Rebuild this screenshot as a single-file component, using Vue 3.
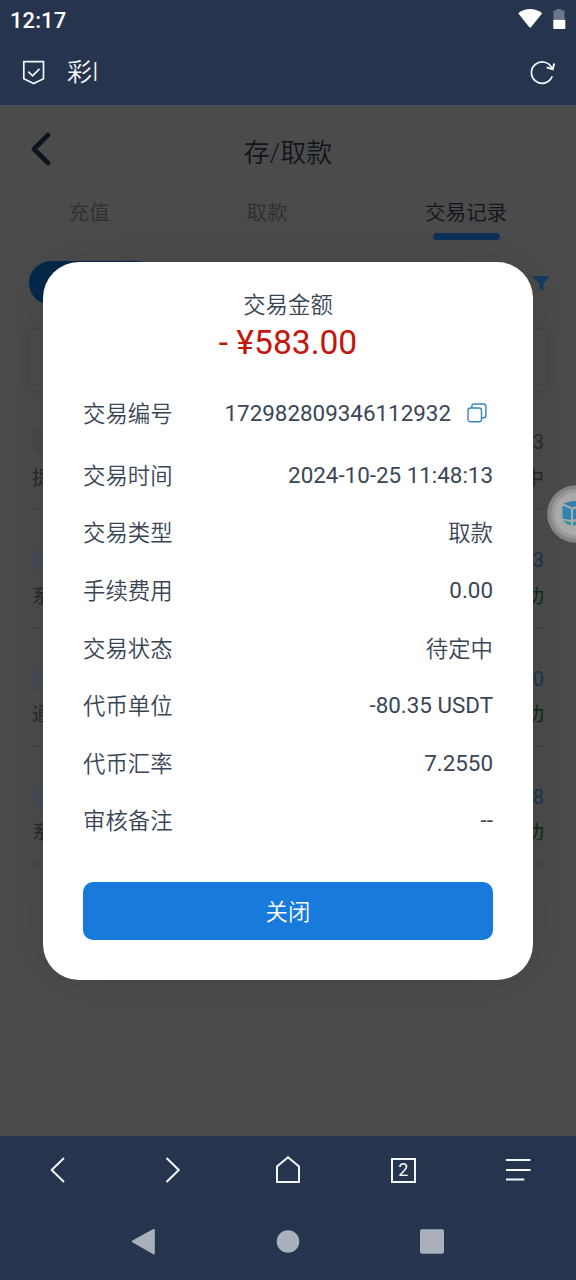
<script setup>
const tabs = ['充值', '取款', '交易记录']
const records = [
  { name: '提', amount: '3', status: '中', kind: 'pending' },
  { name: '系', amount: '3', status: '功', kind: 'done' },
  { name: '通', amount: '0', status: '功', kind: 'done' },
  { name: '系', amount: '8', status: '功', kind: 'done' },
]
const details = [
  ['交易时间', '2024-10-25 11:48:13'],
  ['交易类型', '取款', true],
  ['手续费用', '0.00'],
  ['交易状态', '待定中', true],
  ['代币单位', '-80.35 USDT'],
  ['代币汇率', '7.2550'],
  ['审核备注', '--'],
]
</script>

<template>
  <div class="phone">
    <header class="status">
      <span class="clock">12:17</span>
      <svg width="50" height="24" viewBox="0 0 50 24">
        <path d="M.2 5.2Q12 -3.2 24.2 5.2L13 19.2Q12.2 20 11.4 19.2Z" fill="#fff" />
        <path d="M35.500 2.500h3V.9h5v1.600h3v9h-11z" fill="#6c7789" />
        <path d="M35.3 11.8h12v8.500q0 .8-.8.8H36.1q-.8 0-.8-.8z" fill="#fff" />
      </svg>
    </header>
    <div class="browser">
      <svg class="shield" width="24" height="26" viewBox="0 0 24 26" fill="none" stroke="#f4f7fa" stroke-width="1.7">
        <path d="M1.8 1.700H21.500V18.800L11.700 23.500 1.800 18.800Z" />
        <path d="M6.300 11.700l4.300 4.200 6.900-7" />
      </svg>
      <span class="site">彩I</span>
      <svg class="reload" width="28" height="28" viewBox="0 0 28 28" fill="none" stroke="#f4f7fa" stroke-width="1.7">
        <path d="M23.2 17.3A10.700 10.700 0 1 1 23 9.400" />
        <path d="M17.700 8.400L23.700 10.300 25.200 4.500" stroke-width="2" />
      </svg>
    </div>

    <main class="page">
      <div class="titlebar">
        <svg class="back" width="20" height="34" viewBox="0 0 20 34" fill="none" stroke="#0e1420" stroke-width="4.6" stroke-linecap="round" stroke-linejoin="round">
          <path d="M17 3L3 17l14 14" />
        </svg>
        <span class="title">存/取款</span>
      </div>
      <nav class="tabs">
        <span v-for="(t, i) in tabs" :key="t" class="tab" :class="{ on: i === 2 }">{{ t }}</span>
      </nav>
      <div class="filters">
        <span class="pill"></span>
        <svg width="18" height="18" viewBox="0 0 18 18"><path d="M1 1h16v1.500L11.300 8.500V16l-4-2.600V8.500L1 2.500z" fill="#123c60" /></svg>
      </div>
      <div class="search"></div>
      <ul class="records">
        <li v-for="(r, i) in records" :key="i" :class="r.kind">
          <div class="line top"><i class="dot"></i><span class="sum">{{ r.amount }}</span></div>
          <div class="line"><span>{{ r.name }}</span><span class="state">{{ r.status }}</span></div>
        </li>
      </ul>

      <section class="dialog">
        <div class="caption">交易金额</div>
        <div class="amount">- ¥583.00</div>
        <dl>
          <div class="row first">
            <dt>交易编号</dt>
            <dd>
              172982809346112932
              <svg width="20" height="20" viewBox="0 0 20 20" fill="none" stroke="#3688b8" stroke-width="1.400">
                <rect x="1" y="5" width="13.500" height="13.800" rx="2.600" />
                <path d="M4.800 5V3.400Q4.800 1 7.200 1H16.400Q18.900 1 18.900 3.500V12.300Q18.900 14.800 16.600 14.800H14.500" />
              </svg>
            </dd>
          </div>
          <div v-for="d in details" :key="d[0]" class="row"><dt>{{ d[0] }}</dt><dd :class="{ han: d[2] }">{{ d[1] }}</dd></div>
        </dl>
        <button class="close">关闭</button>
      </section>

      <div class="bubble">
        <svg width="58" height="58" viewBox="0 0 58 58">
          <circle cx="29" cy="29" r="28.800" fill="#858585" />
          <circle cx="29" cy="29" r="25" fill="#999" />
          <circle cx="29" cy="29" r="21.500" fill="#aaaaaa" />
          <path d="M16.500 18.500L25 16h8v4l-8 2.500z" fill="#377fa9" />
          <path d="M15.500 20.500l8.500 3.500v11l-8.500-1.500z" fill="#2b86b2" />
          <path d="M26 24.500l7-2V33.500l-7 1z" fill="#3481b0" />
          <path d="M16.500 35.500l7.500 1.500v3.500q-5-1-7.500-5zM26 37l6-1v4.500h-6z" fill="#2e9595" />
        </svg>
      </div>
    </main>

    <nav class="toolbar">
      <svg viewBox="0 0 30 30"><path d="M21 3L8.700 15l12.300 12" /></svg>
      <svg viewBox="0 0 30 30"><path d="M8.500 3l12.300 12L8.500 27" /></svg>
      <svg viewBox="0 0 30 30"><path d="M4 27V11.500L15 2.300 26 11.500V27Z" /></svg>
      <span class="pages"><b>2</b></span>
      <svg viewBox="0 0 30 30"><path d="M3 5h24.500M3 15h24.500M3 24.500h18.300" /></svg>
    </nav>
    <nav class="system">
      <svg viewBox="0 0 28 28"><path d="M2.800 13.500L23.800 2v23.500z" stroke="#a9afbb" stroke-width="2" stroke-linejoin="round" /></svg>
      <svg viewBox="0 0 28 28"><circle cx="14" cy="13.500" r="11.300" /></svg>
      <svg viewBox="0 0 28 28"><rect x="2" y="1.300" width="24" height="24.400" rx="2" /></svg>
    </nav>
  </div>
</template>

<style>
body { background: #26344e; }
</style>
<style scoped>
* { box-sizing: border-box; }
.phone {
  width: 576px; height: 1280px; overflow: hidden; display: flex; flex-direction: column;
  background: #26344e; font-family: Roboto, "Noto Sans CJK SC", sans-serif;
}
svg { display: block; }
.status { height: 40px; display: flex; justify-content: space-between; align-items: center; padding: 0 8px 0 10px; color: #fff; }
.clock { font-size: 22px; font-weight: 500; letter-spacing: .1px; }
.browser { height: 65px; display: flex; align-items: center; padding: 0 19px 0 22px; color: #f4f7fa; }
.site { margin-left: 21px; font-size: 25px; line-height: 36px; font-weight: 350; }
.reload { margin-left: auto; }
.page { position: relative; height: 1031px; background: #4b4b4b; overflow: hidden; border-top: 1px solid #47535d; }
.titlebar { height: 91px; display: flex; align-items: center; padding-left: 31px; }
.back { margin-top: -5px; }
.title { flex: 1; text-align: center; padding: 0 51px 3px 0; font-size: 26px; color: #10141e; font-weight: 350; }
.tabs { height: 44px; display: flex; font-weight: 350; padding-top: 1px; }
.tab { width: 178px; font-size: 20.500px; line-height: 30px; text-align: center; color: #2d2f34; display: flex; flex-direction: column; align-items: center; }
.tab.on { color: #10141e; margin-left: 21px; }
.tab.on::after { content: ""; width: 67px; height: 7px; border-radius: 4px; background: #0b3158; margin-top: 5px; }
.filters { height: 44px; margin: 20px 26px 0 29px; display: flex; justify-content: space-between; align-items: center; }
.pill { width: 130px; height: 44px; border-radius: 22px; background: #06284a; }
.filters svg { margin-top: 2px; }
.search { height: 61px; margin: 25px 28px 0; border-radius: 8px; background: #4b4b4b; box-shadow: 0 0 5px #404040; }
.records { list-style: none; margin: 0 32px; padding: 1px 0 0; }
.records li { height: 118.300px; border-bottom: 2px dotted #404040; padding-top: 33px; color: #26282c; }
.line { display: flex; justify-content: space-between; align-items: center; height: 34px; font-size: 19.500px; }
.dot { width: 28px; height: 28px; border-radius: 50%; background: #434a53; }
.pending .dot { background: #474747; }
.sum { color: #1b3454; font-size: 20px; }
.pending .sum { color: #292b2e; }
.done .state { color: #0d2c0f; }
.dialog {
  position: absolute; left: 43px; top: 156px; width: 490px; height: 718px; border-radius: 36px; background: #fff;
  padding: 27px 40px 40px; color: #3a4656; box-shadow: 0 0 60px rgba(0, 0, 0, .09); display: flex; flex-direction: column;
}
.caption { text-align: center; font-size: 22.400px; line-height: 32px; font-weight: 350; }
.amount { text-align: center; font-size: 33.600px; line-height: 42px; padding-top: 1px; color: #c3160c; }
dl { margin: 16px 0 0; }
.row { height: 57.600px; display: flex; justify-content: space-between; align-items: center; font-size: 22.400px; }
.row.first { height: 66px; }
.row dt, .row .han { font-weight: 350; padding-bottom: 2px; }
.row dd { margin: 0; display: flex; align-items: center; }
.row.first svg { margin: 0 6px 0 16px; }
.close { margin-top: auto; width: 410px; height: 58px; border: 0; border-radius: 10px; background: #187bdc; color: #fff; font: 350 22.400px Roboto, "Noto Sans CJK SC", sans-serif; padding: 0 0 3px; }
.bubble { position: absolute; left: 547px; top: 379px; }
.toolbar { height: 68px; display: grid; grid-template-columns: repeat(5, 1fr); align-items: center; justify-items: center; }
.toolbar svg { width: 30px; height: 30px; fill: none; stroke: #f4f7fa; stroke-width: 2; }
.pages { width: 25px; height: 25px; border: 2px solid #f4f7fa; color: #f4f7fa; display: flex; align-items: center; justify-content: center; }
.pages b { font-size: 18px; font-weight: 400; line-height: 20px; }
.system { height: 76px; padding: 0 72px; display: grid; grid-template-columns: repeat(3, 1fr); align-items: center; justify-items: center; }
.system svg { width: 28px; height: 28px; fill: #a9afbb; }
</style>
